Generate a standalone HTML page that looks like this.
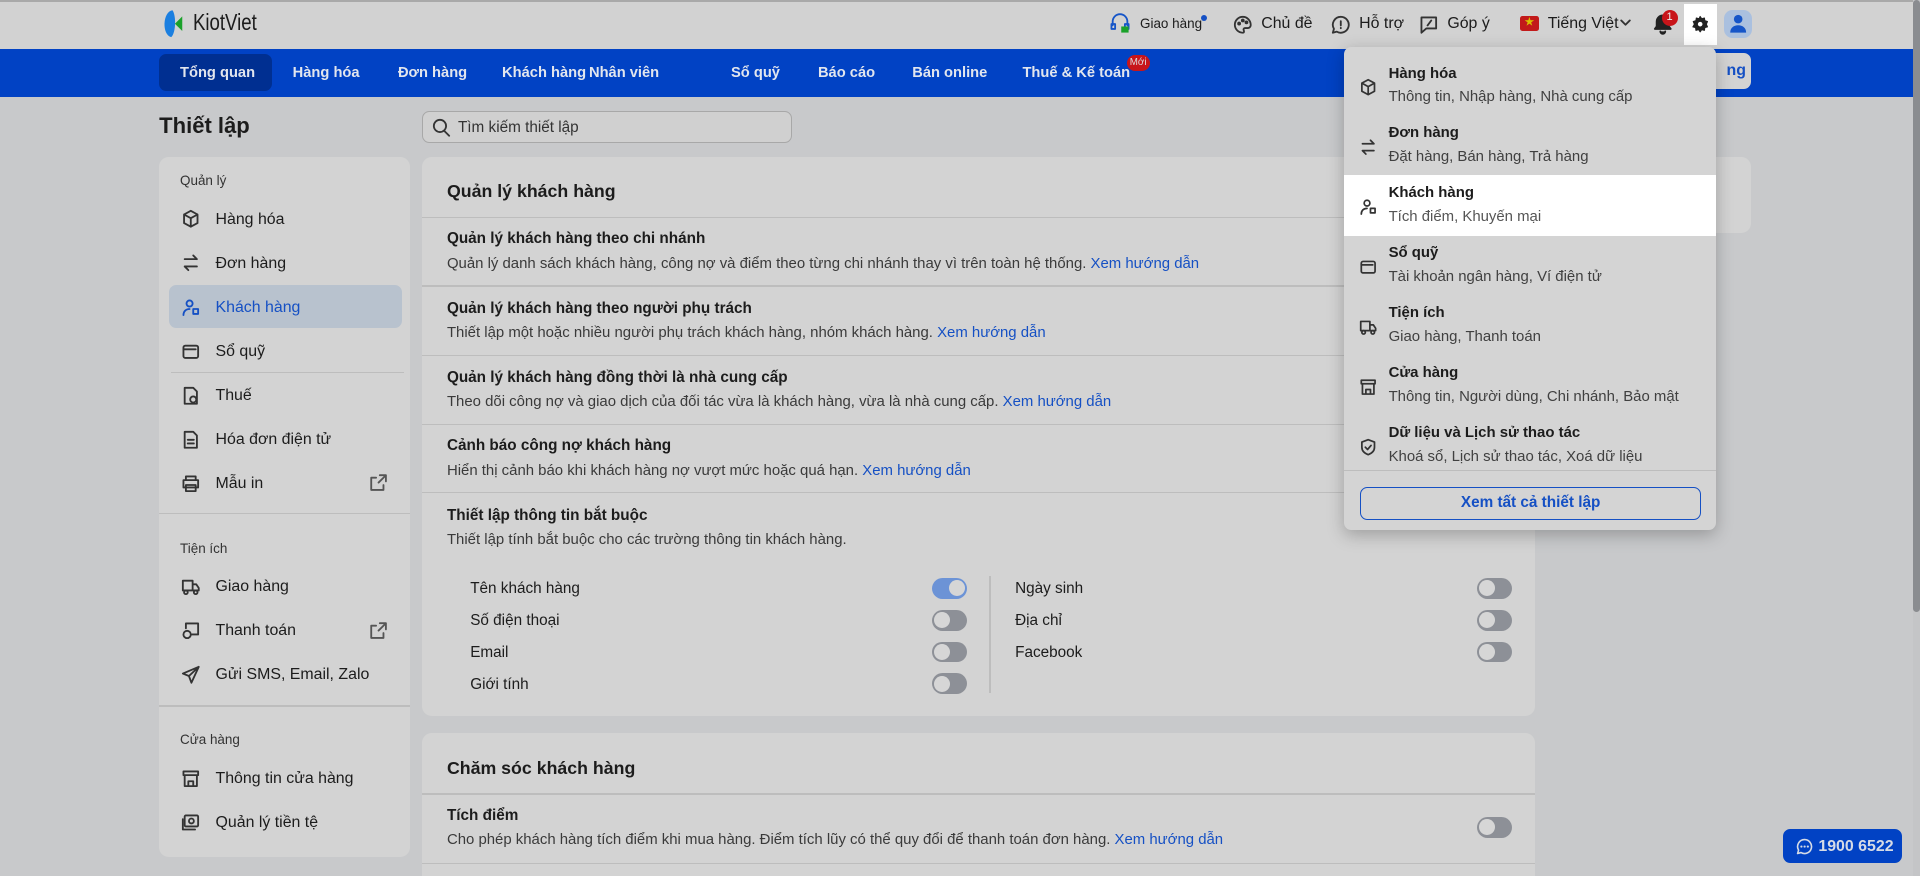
<!DOCTYPE html>
<html><head><meta charset="utf-8"><style>
*{box-sizing:border-box;margin:0;padding:0}
html,body{width:1920px;height:876px;overflow:hidden;background:#c8c9cb}
#w{zoom:1.22449;width:1568px;height:716px;position:relative;font-family:"Liberation Sans","Noto Sans CJK SC",sans-serif;color:#1c1c1c;font-size:13px}
.a{position:absolute}
.hdr{left:0;top:0;width:1568px;height:40px;background:#d2d2d2;border-top:2px solid #a9a9a9}
.nav{left:0;top:40px;width:1568px;height:39px;background:#0142c4}
.navt span{position:absolute;top:13px;color:#e2e6ee;font-weight:bold;font-size:12px;white-space:nowrap}
.card{background:#d3d3d3;border-radius:8px}
.si{position:absolute;left:176px;font-size:13px;color:#1c1c1c;white-space:nowrap}
.ic{position:absolute;left:148px;width:16px;height:16px}
.sec{position:absolute;left:147px;font-size:11px;color:#333}
.hl{position:absolute;height:1px;background:#bdbdbd}
.t{position:absolute;left:365px;font-weight:bold;font-size:12.5px;white-space:nowrap}
.d{position:absolute;left:365px;font-size:12.2px;color:#3a3a3a;white-space:nowrap}
.d b{font-weight:normal;color:#1550c4}
.tg{position:absolute;width:29px;height:17px;border-radius:9px;background:#8d9097}
.tg:after{content:"";position:absolute;left:2px;top:2px;width:13px;height:13px;border-radius:50%;background:#d6d6d6}
.tg.on{background:#6c93d6}.tg.on:after{left:14px}
.lb{position:absolute;font-size:12.5px}
.dd{left:1098px;top:38px;width:303px;height:395px;background:#d4d4d4;border-radius:6px;box-shadow:0 4px 14px rgba(0,0,0,.25)}
.mt{position:absolute;left:1134px;font-weight:bold;font-size:12.2px;white-space:nowrap}
.ms{position:absolute;left:1134px;font-size:12.2px;color:#404040;white-space:nowrap}
.mi{position:absolute;left:1110px;width:15px;height:15px}
svg{fill:none;stroke:#333;stroke-width:1.5;stroke-linecap:round;stroke-linejoin:round}
</style></head><body><div id="w">
<div class="a hdr"></div>
<svg class="a" style="left:130px;top:7px" width="30" height="24" viewBox="0 0 30 24"><path d="M11 1C3 2 2 21 10 23 14 19 14 5 11 1z" fill="#1b7fe0" stroke="none"/><path d="M19 6L13 12 19 18z" fill="#1aa12a" stroke="none"/></svg>
<div class="a" style="left:158px;top:7px;font-size:19px;color:#1c1c1c;transform:scaleX(.8);transform-origin:0 0">KiotViet</div>
<svg class="a" style="left:906px;top:11px" width="18" height="17" viewBox="0 0 18 17"><path d="M3 10V7a6 6 0 0112 0v3M2 9h3v4H2zM13 9h3v4h-3z" stroke="#1655c8"/><rect x="10" y="11" width="6" height="5" fill="#1aa12a" stroke="none"/></svg>
<div class="a" style="left:931px;top:13px;font-size:11px">Giao hàng</div>
<div class="a" style="left:981px;top:12px;width:5px;height:5px;border-radius:50%;background:#1550c4"></div>
<svg class="a" style="left:1007px;top:12px" width="16" height="16" viewBox="0 0 16 16"><path d="M8 1.5a6.5 6.5 0 100 13c1 0 1.3-1 .8-1.8-.6-1 0-2 1.2-2H12a2.5 2.5 0 002.5-2.5C14.5 4.5 11.6 1.5 8 1.5z"/><circle cx="5" cy="7" r=".8"/><circle cx="8" cy="4.5" r=".8"/><circle cx="11" cy="6" r=".8"/></svg>
<div class="a" style="left:1030px;top:12px">Chủ đề</div>
<svg class="a" style="left:1087px;top:12px" width="16" height="16" viewBox="0 0 16 16"><path d="M8 1.5a6.5 6.5 0 00-5.6 9.8L1.5 14.5l3.2-.9A6.5 6.5 0 108 1.5zM8 5v3.5M8 10.5v.3"/></svg>
<div class="a" style="left:1110px;top:12px">Hỗ trợ</div>
<svg class="a" style="left:1159px;top:12px" width="16" height="16" viewBox="0 0 16 16"><path d="M2 2h12v9H6l-4 3.5zM10 4.5L7 8.5"/></svg>
<div class="a" style="left:1182px;top:12px">Góp ý</div>
<div class="a" style="left:1241px;top:13px;width:16px;height:12px;background:#c21a1a;border-radius:2px;color:#d8c000;font-size:8px;text-align:center;line-height:12px">★</div>
<div class="a" style="left:1264px;top:12px">Tiếng Việt</div>
<svg class="a" style="left:1323px;top:15px" width="9" height="8" viewBox="0 0 9 8"><path d="M1 2l3.5 3.5L8 2"/></svg>
<svg class="a" style="left:1350px;top:11px" width="16" height="18" viewBox="0 0 16 18"><path d="M8 2a5 5 0 00-5 5v4l-1.5 2h13L13 11V7a5 5 0 00-5-5zM6 15a2 2 0 004 0" fill="#222" stroke="#222"/></svg>
<div class="a" style="left:1357px;top:8px;width:13px;height:13px;border-radius:50%;background:#c8151a;color:#eee;font-size:9px;text-align:center;line-height:13px">1</div>
<div class="a" style="left:1375px;top:3px;width:27px;height:34px;background:#fff"></div>
<svg class="a" style="left:1381px;top:12px" width="15" height="15" viewBox="0 0 24 24"><path d="M12 2l2 3 3.5-1 .5 3.5 3.5 1-1.5 3.5 1.5 3.5-3.5 1-.5 3.5-3.5-1-2 3-2-3-3.5 1-.5-3.5-3.5-1L4.5 12 3 8.5l3.5-1L7 4l3.5 1z" fill="#222" stroke="#222"/><circle cx="12" cy="12" r="3" fill="#fff" stroke="none"/></svg>
<div class="a" style="left:1408px;top:8px;width:23px;height:23px;border-radius:7px;background:#aac0df"></div>
<svg class="a" style="left:1412px;top:11px" width="15" height="17" viewBox="0 0 15 17"><circle cx="7.5" cy="5" r="3.5" fill="#1655c8" stroke="none"/><path d="M1 16c0-4 3-6 6.5-6S14 12 14 16z" fill="#1655c8" stroke="none"/></svg>

<div class="a nav"></div>
<div class="a" style="left:130px;top:44px;width:92px;height:30px;border-radius:6px;background:#002f91"></div>
<div class="a navt" style="left:0;top:40px;width:1568px;height:39px">
<span style="left:147px">Tổng quan</span><span style="left:239px">Hàng hóa</span><span style="left:325px">Đơn hàng</span><span style="left:410px">Khách hàng</span><span style="left:481px">Nhân viên</span><span style="left:597px">Sổ quỹ</span><span style="left:668px">Báo cáo</span><span style="left:745px">Bán online</span><span style="left:835px">Thuế &amp; Kế toán</span></div>
<div class="a" style="left:920px;top:45px;width:19px;height:13px;border-radius:7px;background:#c8151a;color:#ddd;font-size:8px;text-align:center;line-height:13px">Mới</div>
<div class="a" style="left:1360px;top:43px;width:70px;height:30px;border-radius:6px;background:#d3d3d3;color:#1550c4;font-weight:bold;padding:8px 0 0 50px">ng</div>
<div class="a" style="left:1562px;top:0;width:6px;height:716px;background:#c4c5c7"></div>
<div class="a" style="left:1562px;top:0;width:6px;height:500px;border-radius:3px;background:#8a8c90"></div>

<div class="a" style="left:130px;top:92px;font-size:18px;font-weight:bold">Thiết lập</div>
<div class="a" style="left:345px;top:91px;width:302px;height:26px;border:1px solid #a8a8a8;border-radius:6px;background:#d0d0d0"></div>
<svg class="a" style="left:353px;top:96px" width="15" height="16" viewBox="0 0 15 16"><circle cx="6.5" cy="6.5" r="5"/><path d="M10 10.5l4 4"/></svg>
<div class="a" style="left:374px;top:97px;font-size:12.5px;color:#333">Tìm kiếm thiết lập</div>

<div class="a card" style="left:130px;top:128px;width:205px;height:572px"></div>
<div class="sec" style="top:141px">Quản lý</div>
<svg class="ic" style="top:171px" viewBox="0 0 16 16"><path d="M8 1.5l5.5 3v7L8 14.5 2.5 11.5v-7zM2.5 4.5L8 7.5l5.5-3M8 7.5v7"/></svg><div class="si" style="top:172px">Hàng hóa</div>
<svg class="ic" style="top:207px" viewBox="0 0 16 16"><path d="M3 5h10M10 2l3 3M13 11H3M6 14l-3-3"/></svg><div class="si" style="top:208px">Đơn hàng</div>
<div class="a" style="left:138px;top:233px;width:190px;height:35px;border-radius:6px;background:#b8c2ce"></div>
<svg class="ic" style="top:243px" viewBox="0 0 16 16"><circle cx="7" cy="4.5" r="2.5" stroke="#1550c4"/><path d="M2 14c0-3 2-5 5-5M10 9h4v4h-4z" stroke="#1550c4"/></svg><div class="si" style="top:244px;color:#1550c4">Khách hàng</div>
<svg class="ic" style="top:279px" viewBox="0 0 16 16"><rect x="2" y="3" width="12" height="10" rx="1.5"/><path d="M2 6h10"/></svg><div class="si" style="top:280px">Sổ quỹ</div>
<div class="hl" style="left:140px;top:304px;width:190px"></div>
<svg class="ic" style="top:315px" viewBox="0 0 16 16"><path d="M3 1.5h7l3 3V14.5H3z"/><circle cx="10" cy="11" r="2.5"/></svg><div class="si" style="top:316px">Thuế</div>
<svg class="ic" style="top:351px" viewBox="0 0 16 16"><path d="M3 1.5h7l3 3V14.5H3zM5.5 8h5M5.5 11h5"/></svg><div class="si" style="top:352px">Hóa đơn điện tử</div>
<svg class="ic" style="top:387px" viewBox="0 0 16 16"><path d="M4 5V2h8v3M2 5h12v6H2zM4 9h8v5H4z"/></svg><div class="si" style="top:388px">Mẫu in</div>
<svg class="a" style="left:302px;top:387px" width="14" height="14" viewBox="0 0 14 14"><path d="M8 1h5v5M13 1L7 7M11 9v4H1V3h4" stroke="#555"/></svg>
<div class="hl" style="left:130px;top:419px;width:205px"></div>
<div class="sec" style="top:442px">Tiện ích</div>
<svg class="ic" style="top:471px" viewBox="0 0 16 16"><path d="M1.5 3h8v8h-8zM9.5 6h3l2 3v2h-5"/><circle cx="4" cy="12.5" r="1.5"/><circle cx="12" cy="12.5" r="1.5"/></svg><div class="si" style="top:472px">Giao hàng</div>
<svg class="ic" style="top:507px" viewBox="0 0 16 16"><path d="M4 2h10v9H9M4 2v4"/><circle cx="5" cy="11" r="3"/></svg><div class="si" style="top:508px">Thanh toán</div>
<svg class="a" style="left:302px;top:508px" width="14" height="14" viewBox="0 0 14 14"><path d="M8 1h5v5M13 1L7 7M11 9v4H1V3h4" stroke="#555"/></svg>
<svg class="ic" style="top:543px" viewBox="0 0 16 16"><path d="M14.5 1.5L1.5 7l5 2 2 5.5zM6.5 9l8-7.5"/></svg><div class="si" style="top:544px">Gửi SMS, Email, Zalo</div>
<div class="hl" style="left:130px;top:576px;width:205px"></div>
<div class="sec" style="top:598px">Cửa hàng</div>
<svg class="ic" style="top:628px" viewBox="0 0 16 16"><path d="M2 2h12v3H2zM3 5v9h10V5M6 14v-4h4v4"/></svg><div class="si" style="top:629px">Thông tin cửa hàng</div>
<svg class="ic" style="top:664px" viewBox="0 0 16 16"><rect x="3" y="2" width="11" height="9" rx="1"/><circle cx="8.5" cy="6.5" r="2"/><path d="M1.5 5v8.5h10"/></svg><div class="si" style="top:665px">Quản lý tiền tệ</div>

<div class="a card" style="left:345px;top:128px;width:909px;height:457px"></div>
<div class="a" style="left:365px;top:148px;font-size:14.5px;font-weight:bold">Quản lý khách hàng</div>
<div class="hl" style="left:345px;top:177px;width:909px"></div>
<div class="t" style="top:188px">Quản lý khách hàng theo chi nhánh</div>
<div class="d" style="top:208px">Quản lý danh sách khách hàng, công nợ và điểm theo từng chi nhánh thay vì trên toàn hệ thống. <b>Xem hướng dẫn</b></div>
<div class="hl" style="left:345px;top:233px;width:909px"></div>
<div class="t" style="top:245px">Quản lý khách hàng theo người phụ trách</div>
<div class="d" style="top:265px">Thiết lập một hoặc nhiều người phụ trách khách hàng, nhóm khách hàng. <b>Xem hướng dẫn</b></div>
<div class="hl" style="left:345px;top:290px;width:909px"></div>
<div class="t" style="top:301px">Quản lý khách hàng đồng thời là nhà cung cấp</div>
<div class="d" style="top:321px">Theo dõi công nợ và giao dịch của đối tác vừa là khách hàng, vừa là nhà cung cấp. <b>Xem hướng dẫn</b></div>
<div class="hl" style="left:345px;top:346px;width:909px"></div>
<div class="t" style="top:357px">Cảnh báo công nợ khách hàng</div>
<div class="d" style="top:377px">Hiển thị cảnh báo khi khách hàng nợ vượt mức hoặc quá hạn. <b>Xem hướng dẫn</b></div>
<div class="hl" style="left:345px;top:402px;width:909px"></div>
<div class="t" style="top:414px">Thiết lập thông tin bắt buộc</div>
<div class="d" style="top:434px">Thiết lập tính bắt buộc cho các trường thông tin khách hàng.</div>
<div class="lb" style="left:384px;top:474px">Tên khách hàng</div><div class="tg on" style="left:761px;top:472px"></div>
<div class="lb" style="left:384px;top:500px">Số điện thoại</div><div class="tg" style="left:761px;top:498px"></div>
<div class="lb" style="left:384px;top:526px">Email</div><div class="tg" style="left:761px;top:524px"></div>
<div class="lb" style="left:384px;top:552px">Giới tính</div><div class="tg" style="left:761px;top:550px"></div>
<div class="a" style="left:808px;top:470px;width:1px;height:96px;background:#bdbdbd"></div>
<div class="lb" style="left:829px;top:474px">Ngày sinh</div><div class="tg" style="left:1206px;top:472px"></div>
<div class="lb" style="left:829px;top:500px">Địa chỉ</div><div class="tg" style="left:1206px;top:498px"></div>
<div class="lb" style="left:829px;top:526px">Facebook</div><div class="tg" style="left:1206px;top:524px"></div>

<div class="a card" style="left:345px;top:599px;width:909px;height:130px"></div>
<div class="a" style="left:365px;top:619px;font-size:14.5px;font-weight:bold">Chăm sóc khách hàng</div>
<div class="hl" style="left:345px;top:648px;width:909px"></div>
<div class="t" style="top:659px">Tích điểm</div>
<div class="d" style="top:679px">Cho phép khách hàng tích điểm khi mua hàng. Điểm tích lũy có thể quy đổi để thanh toán đơn hàng. <b>Xem hướng dẫn</b></div>
<div class="tg" style="left:1206px;top:667px"></div>
<div class="hl" style="left:345px;top:705px;width:909px"></div>

<div class="a card" style="left:1254px;top:128px;width:176px;height:62px"></div>

<div class="a dd"></div>
<div class="a" style="left:1098px;top:143px;width:303px;height:50px;background:#fff"></div>
<svg class="mi" style="top:64px" viewBox="0 0 16 16"><path d="M8 1.5l5.5 3v7L8 14.5 2.5 11.5v-7zM2.5 4.5L8 7.5l5.5-3M8 7.5v7"/></svg>
<div class="mt" style="top:53px">Hàng hóa</div><div class="ms" style="top:72px">Thông tin, Nhập hàng, Nhà cung cấp</div>
<svg class="mi" style="top:113px" viewBox="0 0 16 16"><path d="M3 5h10M10 2l3 3M13 11H3M6 14l-3-3"/></svg>
<div class="mt" style="top:101px">Đơn hàng</div><div class="ms" style="top:121px">Đặt hàng, Bán hàng, Trả hàng</div>
<svg class="mi" style="top:162px" viewBox="0 0 16 16"><circle cx="7" cy="4.5" r="2.5"/><path d="M2 14c0-3 2-5 5-5M10 9h4v4h-4z"/></svg>
<div class="mt" style="top:150px">Khách hàng</div><div class="ms" style="top:170px;color:#555">Tích điểm, Khuyến mại</div>
<svg class="mi" style="top:211px" viewBox="0 0 16 16"><rect x="2" y="3" width="12" height="10" rx="1.5"/><path d="M2 6h10"/></svg>
<div class="mt" style="top:199px">Sổ quỹ</div><div class="ms" style="top:219px">Tài khoản ngân hàng, Ví điện tử</div>
<svg class="mi" style="top:260px" viewBox="0 0 16 16"><path d="M1.5 3h8v8h-8zM9.5 6h3l2 3v2h-5"/><circle cx="4" cy="12.5" r="1.5"/><circle cx="12" cy="12.5" r="1.5"/></svg>
<div class="mt" style="top:248px">Tiện ích</div><div class="ms" style="top:268px">Giao hàng, Thanh toán</div>
<svg class="mi" style="top:309px" viewBox="0 0 16 16"><path d="M2 2h12v3H2zM3 5v9h10V5M6 14v-4h4v4"/></svg>
<div class="mt" style="top:297px">Cửa hàng</div><div class="ms" style="top:317px">Thông tin, Người dùng, Chi nhánh, Bảo mật</div>
<svg class="mi" style="top:358px" viewBox="0 0 16 16"><path d="M8 1.5l5.5 2v4.5c0 3.5-2.5 5.5-5.5 6.5-3-1-5.5-3-5.5-6.5V3.5zM5.5 8l2 2 3-3.5"/></svg>
<div class="mt" style="top:346px">Dữ liệu và Lịch sử thao tác</div><div class="ms" style="top:366px">Khoá sổ, Lịch sử thao tác, Xoá dữ liệu</div>
<div class="hl" style="left:1098px;top:384px;width:303px"></div>
<div class="a" style="left:1111px;top:398px;width:278px;height:27px;border:1px solid #1550c4;border-radius:6px;color:#1550c4;font-weight:bold;font-size:12.5px;text-align:center;line-height:25px">Xem tất cả thiết lập</div>

<div class="a" style="left:1456px;top:677px;width:97px;height:28px;border-radius:6px;background:#0142c4"></div>
<svg class="a" style="left:1467px;top:684px" width="14" height="14" viewBox="0 0 16 16"><path d="M8 1.5a6.5 6.5 0 00-5.6 9.8L1.5 14.5l3.2-.9A6.5 6.5 0 108 1.5z" stroke="#d6dbe6"/><path d="M5 8h.1M8 8h.1M11 8h.1" stroke="#d6dbe6" stroke-width="2"/></svg>
<div class="a" style="left:1485px;top:684px;color:#d6dbe6;font-weight:bold;font-size:13px">1900 6522</div>
</div></body></html>
